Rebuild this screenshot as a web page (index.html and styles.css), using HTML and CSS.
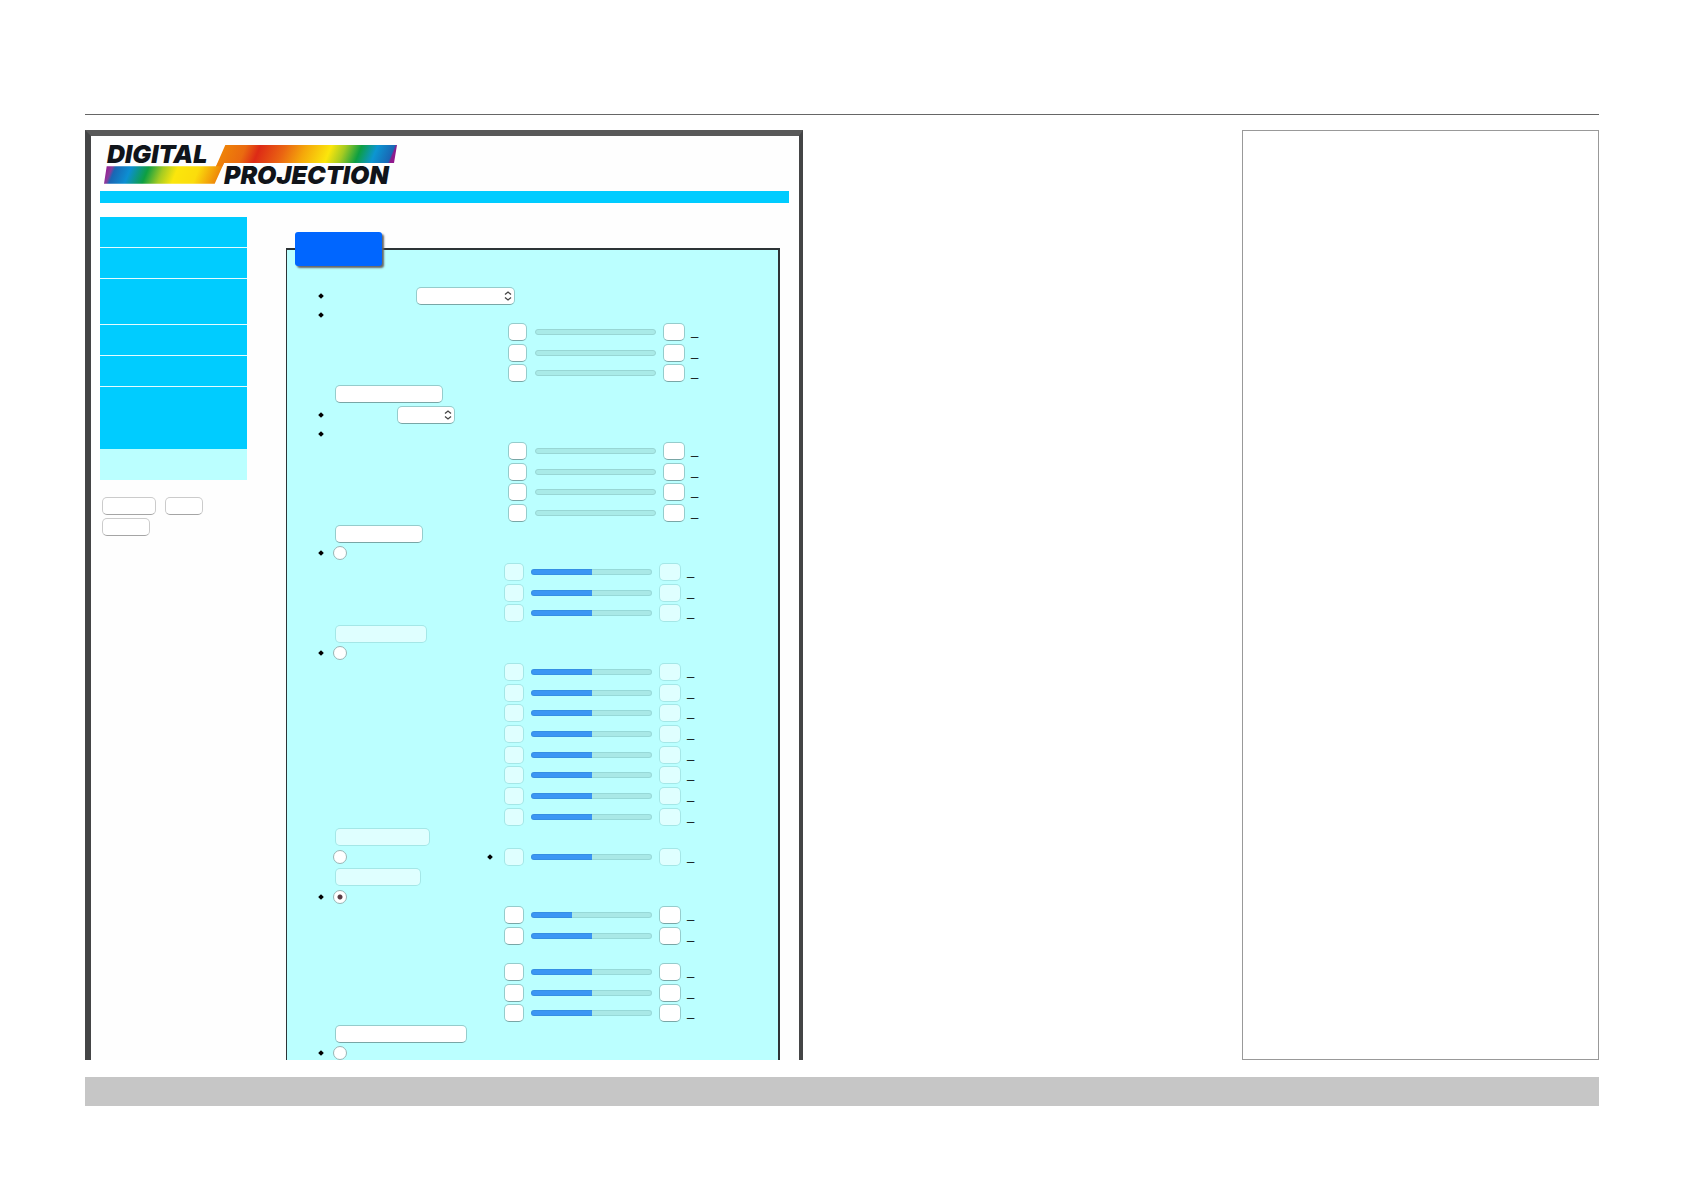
FILE: index.html
```html
<!DOCTYPE html>
<html lang="en">

<head>
    <meta charset="UTF-8">
    <meta name="viewport" content="width=device-width, initial-scale=1.0">
    <title>Digital Projection</title>
    <link rel="stylesheet" href="styles.css">
</head>

<body>
    <header class="page-header"></header>

    <main class="page-main">
        <div class="screen">
            <svg class="logo" viewBox="0 0 293 39" role="img" aria-label="Digital Projection">
                <defs>
                    <linearGradient id="upper" gradientUnits="userSpaceOnUse" x1="121" y1="0" x2="299" y2="0" gradientTransform="skewX(-22)">
                        <stop offset="0" stop-color="#ee8208" />
                        <stop offset="0.12" stop-color="#ea6a10" />
                        <stop offset="0.2" stop-color="#dd2a16" />
                        <stop offset="0.34" stop-color="#ea6412" />
                        <stop offset="0.46" stop-color="#f5a80a" />
                        <stop offset="0.6" stop-color="#fbe60c" />
                        <stop offset="0.68" stop-color="#a5cb22" />
                        <stop offset="0.77" stop-color="#0d9f42" />
                        <stop offset="0.86" stop-color="#0c96d2" />
                        <stop offset="0.955" stop-color="#1a66b4" />
                        <stop offset="0.965" stop-color="#8a1c8c" />
                        <stop offset="1" stop-color="#9c1690" />
                    </linearGradient>
                    <linearGradient id="lower" gradientUnits="userSpaceOnUse" x1="10" y1="0" x2="128" y2="0" gradientTransform="skewX(-22)">
                        <stop offset="0" stop-color="#9c1690" />
                        <stop offset="0.06" stop-color="#8a3c9c" />
                        <stop offset="0.09" stop-color="#1a66b4" />
                        <stop offset="0.22" stop-color="#0c8fd2" />
                        <stop offset="0.37" stop-color="#0d9f42" />
                        <stop offset="0.5" stop-color="#a5cb22" />
                        <stop offset="0.62" stop-color="#fbe60c" />
                        <stop offset="0.8" stop-color="#fbdc0c" />
                        <stop offset="1" stop-color="#ee8208" />
                    </linearGradient>
                </defs>
                <polygon fill="url(#lower)" points="2.7,21.3 112,21.3 114,18 120,18 110.7,38.7 0,38.7" />
                <polygon fill="url(#upper)" points="121.3,0 293,0 290,18 120,18 118.5,21.3 112,21.3" />
                <text class="logo-text" x="3" y="18">DIGITAL</text>
                <text class="logo-text" x="120" y="39">PROJECTION</text>
            </svg>
            <div class="bar"></div>

            <div class="columns">
                <aside class="sidebar">
                    <nav class="menu">
                        <a class="menu-item" href="#" aria-label="Menu 1"></a>
                        <a class="menu-item" href="#" aria-label="Menu 2"></a>
                        <a class="menu-item two-lines" href="#" aria-label="Menu 3"></a>
                        <a class="menu-item" href="#" aria-label="Menu 4"></a>
                        <a class="menu-item" href="#" aria-label="Menu 5"></a>
                        <a class="menu-item three-lines" href="#" aria-label="Menu 6"></a>
                        <a class="menu-item active" href="#" aria-label="Menu 7"></a>
                    </nav>
                    <div class="sidebar-buttons">
                        <button class="btn w54" aria-label="Refresh"></button>
                        <button class="btn w38" aria-label="On"></button>
                        <button class="btn w48" aria-label="Off"></button>
                    </div>
                </aside>

                <section class="panel">
                    <div class="tab"></div>

                    <div class="line select-line">
                        <span class="bullet"></span>
                        <label class="label-long" for="mode"></label>
                        <div class="select-box w99">
                            <select id="mode"><option></option></select>
                            <svg class="arrows" viewBox="0 0 8 10"><path d="M1 3.5 L4 1 L7 3.5 M1 6.5 L4 9 L7 6.5" /></svg>
                        </div>
                    </div>
                    <div class="line text-line"><span class="bullet"></span></div>
                    <div class="sliders wide">
                        <div class="slider-row">
                            <button class="btn less" aria-label="Less"></button>
                            <input class="slider" type="range" value="0" aria-label="Level">
                            <button class="btn more" aria-label="More"></button>
                            <span class="value">_</span>
                        </div>
                        <div class="slider-row">
                            <button class="btn less" aria-label="Less"></button>
                            <input class="slider" type="range" value="0" aria-label="Level">
                            <button class="btn more" aria-label="More"></button>
                            <span class="value">_</span>
                        </div>
                        <div class="slider-row">
                            <button class="btn less" aria-label="Less"></button>
                            <input class="slider" type="range" value="0" aria-label="Level">
                            <button class="btn more" aria-label="More"></button>
                            <span class="value">_</span>
                        </div>
                    </div>
                    <button class="btn reset w108" aria-label="Reset"></button>

                    <div class="line select-line">
                        <span class="bullet"></span>
                        <label class="label-short" for="gamma"></label>
                        <div class="select-box w58">
                            <select id="gamma"><option></option></select>
                            <svg class="arrows" viewBox="0 0 8 10"><path d="M1 3.5 L4 1 L7 3.5 M1 6.5 L4 9 L7 6.5" /></svg>
                        </div>
                    </div>
                    <div class="line text-line"><span class="bullet"></span></div>
                    <div class="sliders wide">
                        <div class="slider-row">
                            <button class="btn less" aria-label="Less"></button>
                            <input class="slider" type="range" value="0" aria-label="Level">
                            <button class="btn more" aria-label="More"></button>
                            <span class="value">_</span>
                        </div>
                        <div class="slider-row">
                            <button class="btn less" aria-label="Less"></button>
                            <input class="slider" type="range" value="0" aria-label="Level">
                            <button class="btn more" aria-label="More"></button>
                            <span class="value">_</span>
                        </div>
                        <div class="slider-row">
                            <button class="btn less" aria-label="Less"></button>
                            <input class="slider" type="range" value="0" aria-label="Level">
                            <button class="btn more" aria-label="More"></button>
                            <span class="value">_</span>
                        </div>
                        <div class="slider-row">
                            <button class="btn less" aria-label="Less"></button>
                            <input class="slider" type="range" value="0" aria-label="Level">
                            <button class="btn more" aria-label="More"></button>
                            <span class="value">_</span>
                        </div>
                    </div>
                    <button class="btn reset w88" aria-label="Reset"></button>

                    <div class="line radio-line">
                        <span class="bullet"></span>
                        <input class="radio" type="radio" name="correction" aria-label="Correction 1">
                    </div>
                    <div class="sliders">
                        <div class="slider-row">
                            <button class="btn less" aria-label="Less" disabled></button>
                            <input class="slider half" type="range" value="50" aria-label="Level" disabled>
                            <button class="btn more" aria-label="More" disabled></button>
                            <span class="value">_</span>
                        </div>
                        <div class="slider-row">
                            <button class="btn less" aria-label="Less" disabled></button>
                            <input class="slider half" type="range" value="50" aria-label="Level" disabled>
                            <button class="btn more" aria-label="More" disabled></button>
                            <span class="value">_</span>
                        </div>
                        <div class="slider-row">
                            <button class="btn less" aria-label="Less" disabled></button>
                            <input class="slider half" type="range" value="50" aria-label="Level" disabled>
                            <button class="btn more" aria-label="More" disabled></button>
                            <span class="value">_</span>
                        </div>
                    </div>
                    <button class="btn reset w92" aria-label="Reset" disabled></button>

                    <div class="line radio-line">
                        <span class="bullet"></span>
                        <input class="radio" type="radio" name="correction" aria-label="Correction 2">
                    </div>
                    <div class="sliders">
                        <div class="slider-row">
                            <button class="btn less" aria-label="Less" disabled></button>
                            <input class="slider half" type="range" value="50" aria-label="Level" disabled>
                            <button class="btn more" aria-label="More" disabled></button>
                            <span class="value">_</span>
                        </div>
                        <div class="slider-row">
                            <button class="btn less" aria-label="Less" disabled></button>
                            <input class="slider half" type="range" value="50" aria-label="Level" disabled>
                            <button class="btn more" aria-label="More" disabled></button>
                            <span class="value">_</span>
                        </div>
                        <div class="slider-row">
                            <button class="btn less" aria-label="Less" disabled></button>
                            <input class="slider half" type="range" value="50" aria-label="Level" disabled>
                            <button class="btn more" aria-label="More" disabled></button>
                            <span class="value">_</span>
                        </div>
                        <div class="slider-row">
                            <button class="btn less" aria-label="Less" disabled></button>
                            <input class="slider half" type="range" value="50" aria-label="Level" disabled>
                            <button class="btn more" aria-label="More" disabled></button>
                            <span class="value">_</span>
                        </div>
                        <div class="slider-row">
                            <button class="btn less" aria-label="Less" disabled></button>
                            <input class="slider half" type="range" value="50" aria-label="Level" disabled>
                            <button class="btn more" aria-label="More" disabled></button>
                            <span class="value">_</span>
                        </div>
                        <div class="slider-row">
                            <button class="btn less" aria-label="Less" disabled></button>
                            <input class="slider half" type="range" value="50" aria-label="Level" disabled>
                            <button class="btn more" aria-label="More" disabled></button>
                            <span class="value">_</span>
                        </div>
                        <div class="slider-row">
                            <button class="btn less" aria-label="Less" disabled></button>
                            <input class="slider half" type="range" value="50" aria-label="Level" disabled>
                            <button class="btn more" aria-label="More" disabled></button>
                            <span class="value">_</span>
                        </div>
                        <div class="slider-row">
                            <button class="btn less" aria-label="Less" disabled></button>
                            <input class="slider half" type="range" value="50" aria-label="Level" disabled>
                            <button class="btn more" aria-label="More" disabled></button>
                            <span class="value">_</span>
                        </div>
                    </div>
                    <button class="btn reset w95" aria-label="Reset" disabled></button>

                    <!-- radio and its only slider share one line -->
                    <div class="line single">
                        <input class="radio" type="radio" name="correction" aria-label="Correction 3">
                        <span class="bullet"></span>
                        <button class="btn less" aria-label="Less" disabled></button>
                        <input class="slider half" type="range" value="50" aria-label="Level" disabled>
                        <button class="btn more" aria-label="More" disabled></button>
                        <span class="value">_</span>
                    </div>
                    <button class="btn reset w86" aria-label="Reset" disabled></button>

                    <div class="line">
                        <span class="bullet"></span>
                        <input class="radio" type="radio" name="correction" aria-label="Correction 4" checked>
                    </div>
                    <div class="sliders">
                        <div class="slider-row">
                            <button class="btn less" aria-label="Less"></button>
                            <input class="slider third" type="range" value="34" aria-label="Level">
                            <button class="btn more" aria-label="More"></button>
                            <span class="value">_</span>
                        </div>
                        <div class="slider-row">
                            <button class="btn less" aria-label="Less"></button>
                            <input class="slider half" type="range" value="50" aria-label="Level">
                            <button class="btn more" aria-label="More"></button>
                            <span class="value">_</span>
                        </div>
                    </div>
                    <div class="sliders spaced">
                        <div class="slider-row">
                            <button class="btn less" aria-label="Less"></button>
                            <input class="slider half" type="range" value="50" aria-label="Level">
                            <button class="btn more" aria-label="More"></button>
                            <span class="value">_</span>
                        </div>
                        <div class="slider-row">
                            <button class="btn less" aria-label="Less"></button>
                            <input class="slider half" type="range" value="50" aria-label="Level">
                            <button class="btn more" aria-label="More"></button>
                            <span class="value">_</span>
                        </div>
                        <div class="slider-row">
                            <button class="btn less" aria-label="Less"></button>
                            <input class="slider half" type="range" value="50" aria-label="Level">
                            <button class="btn more" aria-label="More"></button>
                            <span class="value">_</span>
                        </div>
                    </div>
                    <button class="btn reset w132" aria-label="Reset"></button>

                    <div class="line radio-line">
                        <span class="bullet"></span>
                        <input class="radio" type="radio" name="correction" aria-label="Correction 5">
                    </div>
                </section>
            </div>
        </div>

        <aside class="notes"></aside>
    </main>

    <footer class="page-footer"></footer>
</body>

</html>
```

FILE: styles.css
```css
* {
    box-sizing: border-box;
}

body {
    margin: 0;
    padding: 114px 85px 85px;
    height: 100vh;
    display: flex;
    flex-direction: column;
    background: #fff;
    color: #000;
    font-family: "Liberation Sans", Arial, sans-serif;
    font-size: 13px;
}

.page-header {
    border-top: 1px solid #666;
    margin-bottom: 15px;
}

.page-main {
    flex: 1;
    min-height: 0;
    display: grid;
    grid-template-columns: 718fr 357fr;
    column-gap: 29%;
}

.page-footer {
    height: 29px;
    margin-top: 17px;
    background: #c6c6c6;
}

.notes {
    border: 1px solid #999;
}

/* Projector web page */
.screen {
    overflow: hidden;
    padding: 9px 10px 0 9px;
    border: solid #444546;
    border-width: 6px 4px 0 6px;
    border-top-color: #595959;
    background: #fefefe;
}

.logo {
    display: block;
    width: 293px;
    height: 39px;
    margin-left: 4px;
    overflow: visible;
}

.logo-text {
    font: italic 900 25px Inter, sans-serif;
    fill: #10141a;
}

.bar {
    height: 12px;
    margin: 7px 0 14px;
    background: #0cf;
}

.columns {
    display: flex;
    gap: 39px;
}

.sidebar {
    width: 147px;
}

.menu {
    display: flex;
    flex-direction: column;
}

.menu-item {
    height: 31px;
    background: #0cf;
    border-bottom: 1px solid #e4fbff;
}

.menu-item.two-lines {
    height: 46px;
}

.menu-item.three-lines {
    height: 62px;
    border-bottom: none;
}

.menu-item.active {
    background: #bff;
    border-bottom: none;
}

.sidebar-buttons {
    display: flex;
    flex-wrap: wrap;
    gap: 3px 9px;
    padding: 17px 0 0 2px;
}

/* Controls */
.btn {
    display: block;
    flex: none;
    height: 18px;
    margin: 0;
    padding: 0;
    border: 1px solid rgba(0, 0, 0, 0.2);
    border-bottom-color: rgba(0, 0, 0, 0.35);
    border-radius: 5px;
    background: #fff;
    background-clip: padding-box;
}

.btn:disabled {
    border-color: rgba(0, 60, 60, 0.12);
    background-color: #dfffff;
}

.w38 { width: 38px; }
.w48 { width: 48px; }
.w54 { width: 54px; }
.w58 { width: 58px; }
.w86 { width: 86px; }
.w88 { width: 88px; }
.w92 { width: 92px; }
.w95 { width: 95px; }
.w99 { width: 99px; }
.w108 { width: 108px; }
.w132 { width: 132px; }

.less {
    width: 20px;
}

.more {
    width: 22px;
}

.radio {
    appearance: none;
    flex: none;
    width: 14px;
    height: 14px;
    margin: 0;
    border: 1px solid #9ab5b5;
    border-radius: 50%;
    background: #fff;
}

.radio:checked {
    background: radial-gradient(circle, #5a3c44 2px, #fff 3px);
}

.select-box {
    position: relative;
    height: 18px;
}

.select-box select {
    appearance: none;
    display: block;
    width: 100%;
    height: 100%;
    padding: 0;
    border: 1px solid rgba(0, 0, 0, 0.2);
    border-bottom-color: rgba(0, 0, 0, 0.35);
    border-radius: 5px;
    background: #fff;
    background-clip: padding-box;
}

.arrows {
    position: absolute;
    top: 4px;
    right: 3px;
    width: 8px;
    height: 10px;
    fill: none;
    stroke: #444;
    stroke-width: 1.3;
    pointer-events: none;
}

.slider {
    appearance: none;
    flex: none;
    width: 121px;
    height: 6px;
    margin: 0 7px;
    border: 1px solid #98d6d4;
    border-radius: 3px;
    background: #a9ebe8;
}

.slider.half {
    border: none;
    background: linear-gradient(90deg, #3b96f4 50%, #a9e9e7 50%);
    box-shadow: inset 0 0 0 1px rgba(0, 80, 90, 0.1);
}

.slider.third {
    border: none;
    background: linear-gradient(90deg, #3b96f4 34%, #a9e9e7 34%);
    box-shadow: inset 0 0 0 1px rgba(0, 80, 90, 0.1);
}

.slider::-webkit-slider-thumb {
    appearance: none;
    width: 0;
    height: 0;
}

.value {
    margin-left: 6px;
    padding-bottom: 2px;
    line-height: 18px;
}

/* Settings panel */
.panel {
    position: relative;
    flex: 1;
    margin: 31px 9px 0 0;
    padding-top: 36px;
    border: solid #2d3436;
    border-width: 2px 2px 0 1px;
    background: #bff;
}

.tab {
    position: absolute;
    top: -18px;
    left: 8px;
    width: 87px;
    height: 34px;
    border-radius: 3px;
    background: #06f;
    box-shadow: 2px 2px 2px #666;
}

.line {
    display: flex;
    align-items: center;
    height: 18px;
    padding-left: 32px;
}

.select-line {
    height: 20px;
}

.text-line {
    height: 17px;
}

.radio-line {
    height: 15px;
    margin-bottom: 3px;
}

.bullet {
    flex: none;
    width: 4px;
    height: 4px;
    margin-right: 10px;
    background: #000;
    transform: rotate(45deg);
}

.label-long {
    width: 83px;
}

.label-short {
    width: 64px;
}

.sliders {
    padding-left: 217px;
}

.sliders.wide {
    padding-left: 221px;
}

.wide .less {
    width: 19px;
    margin-right: 1px;
}

.sliders.spaced {
    padding-top: 16px;
}

.slider-row {
    display: flex;
    align-items: center;
    height: 18px;
    margin-bottom: 3px;
}

.slider-row:nth-child(3n + 2) {
    margin-bottom: 2px;
}

.reset {
    margin: 0 0 2px 48px;
}

.single {
    padding-left: 46px;
    margin-bottom: 2px;
}

.single .bullet {
    margin: 0 12px 0 141px;
}
```
